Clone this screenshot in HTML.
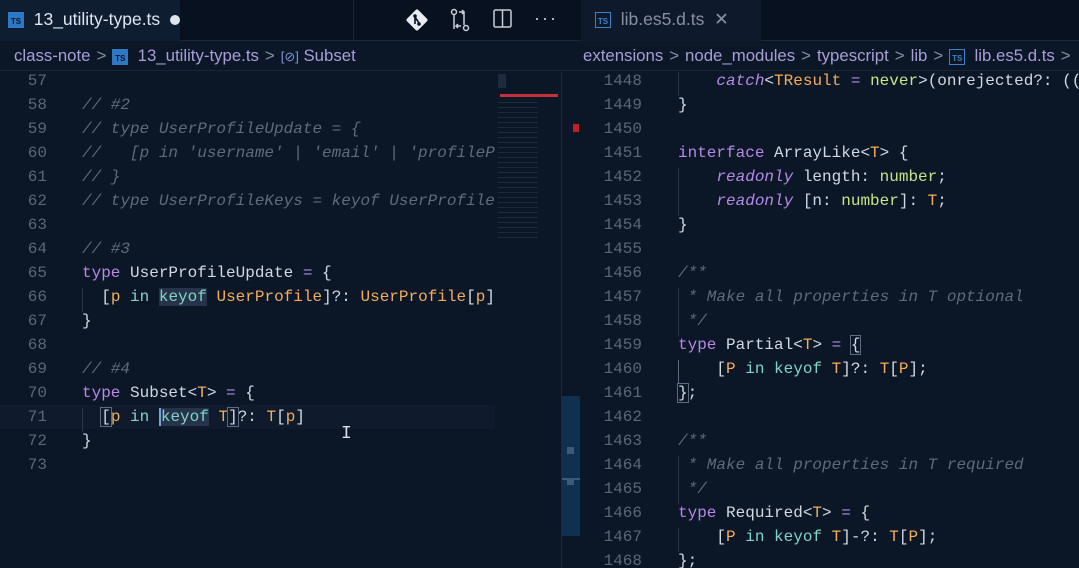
<!DOCTYPE html>
<html><head><meta charset="utf-8"><style>
*{margin:0;padding:0;box-sizing:border-box}
body{width:1079px;height:568px;overflow:hidden;background:#0b1626;font-family:"Liberation Sans",sans-serif;position:relative}
.abs{position:absolute}
.tabbar{top:0;height:41px;background:#08111f;border-bottom:1px solid #1b2638}
.ts{display:inline-block;width:16px;height:16px;background:#2f78c4;color:#0b1626;font-size:8px;font-weight:bold;line-height:20px;text-align:center;vertical-align:middle}
.tsb{display:inline-block;width:16px;height:16px;border:1.5px solid #3c82c8;color:#3c82c8;font-size:8px;font-weight:bold;line-height:18px;text-align:center;vertical-align:middle}
.crumb{color:#a99ed8;font-size:16.8px;top:46px;white-space:nowrap}
.crumb .s{color:#8890a8;margin:0 6px}
.code{font-family:"Liberation Mono",monospace;font-size:16px;white-space:pre;color:#d3d9e2}
.ln{font-family:"Liberation Mono",monospace;font-size:16px;color:#5b6678;text-align:right}
.l{position:absolute;height:24px;line-height:24px}
.c{color:#5f6b7a;font-style:italic}
.k{color:#b58ae6}
.t{color:#f2ae5c}
.q{color:#7fd6c6}
.n{color:#c6e58a}
.o{color:#b58ae6}
.ki{color:#b58ae6;font-style:italic}
.hl{background:#26334a}
.bx{outline:1px solid #5d6b80}
</style></head><body>
<div class="abs tabbar" style="left:0;width:1079px"></div>
<div class="abs" style="left:0;top:0;width:180px;height:41px;background:#0f1d31"></div>
<div class="abs" style="left:8px;top:9px;font-size:17.5px;color:#dfe5ee;white-space:nowrap"><span class="ts">TS</span>&nbsp; 13_utility-type.ts &nbsp;<span style="display:inline-block;width:10px;height:10px;border-radius:5px;background:#dfe5ee;vertical-align:middle"></span></div>
<div class="abs" style="left:353px;top:0;width:1px;height:41px;background:#1b2638"></div>
<svg class="abs" style="left:404px;top:7px" width="26" height="26" viewBox="0 0 26 26"><rect x="5" y="5" width="16" height="16" transform="rotate(45 13 13)" fill="#e8ecf2" rx="2"/><circle cx="11" cy="9" r="1.8" fill="#08111f"/><circle cx="15" cy="17" r="1.8" fill="#08111f"/><path d="M11 9 V17 M11 10 L15 16" stroke="#08111f" stroke-width="1.6"/></svg>
<svg class="abs" style="left:449px;top:8px" width="22" height="24" viewBox="0 0 22 24" fill="none" stroke="#c8ced8" stroke-width="1.5"><circle cx="5" cy="4" r="2.5"/><circle cx="17" cy="20" r="2.5"/><path d="M5 7v14M10 4h5v13M13 2l2 2-2 2M9 20l-2-2 2-2M7 18h5"/></svg>
<svg class="abs" style="left:492px;top:8px" width="22" height="22" viewBox="0 0 22 22" fill="none" stroke="#c8ced8" stroke-width="1.5"><rect x="2" y="2" width="17" height="17" rx="1.5"/><path d="M10.5 2v17"/></svg>
<div class="abs" style="left:534px;top:8px;color:#c8ced8;font-size:18px;letter-spacing:2px">···</div>
<div class="abs" style="left:581px;top:0;width:180px;height:41px;background:#0e1a2c"></div>
<div class="abs" style="left:595px;top:9px;font-size:17.5px;color:#8890a0;white-space:nowrap"><span class="tsb">TS</span>&nbsp; lib.es5.d.ts &nbsp;<span style="color:#8890a0">✕</span></div>
<div class="abs" style="left:0;top:41px;width:1079px;height:30px;background:#0b1626;border-bottom:1px solid #1a2538"></div>
<div class="abs crumb" style="left:14px">class-note<span class="s">&gt;</span><span class="ts">TS</span>&nbsp; 13_utility-type.ts<span class="s">&gt;</span><span style="color:#7a9ad8;font-size:13px">[⊘]</span> Subset</div>
<div class="abs crumb" style="left:583px">extensions<span class="s">&gt;</span>node_modules<span class="s">&gt;</span>typescript<span class="s">&gt;</span>lib<span class="s">&gt;</span><span class="tsb">TS</span>&nbsp; lib.es5.d.ts<span class="s">&gt;</span></div>
<div class="abs" style="left:0;top:72px;width:495px;height:496px;overflow:hidden">
<div class="abs" style="left:0;top:333px;width:495px;height:24px;background:#0f1b2d"></div>
<div class="abs ln" style="left:0;top:-3px;width:47px">
<div class="l" style="top:0;right:0">57</div><div class="l" style="top:24px;right:0">58</div><div class="l" style="top:48px;right:0">59</div><div class="l" style="top:72px;right:0">60</div><div class="l" style="top:96px;right:0">61</div><div class="l" style="top:120px;right:0">62</div><div class="l" style="top:144px;right:0">63</div><div class="l" style="top:168px;right:0">64</div><div class="l" style="top:192px;right:0">65</div><div class="l" style="top:216px;right:0">66</div><div class="l" style="top:240px;right:0">67</div><div class="l" style="top:264px;right:0">68</div><div class="l" style="top:288px;right:0">69</div><div class="l" style="top:312px;right:0">70</div><div class="l" style="top:336px;right:0">71</div><div class="l" style="top:360px;right:0">72</div><div class="l" style="top:384px;right:0">73</div>
</div>
<div class="abs code" style="left:82px;top:-3px">
<div class="l c" style="top:24px">// #2</div>
<div class="l c" style="top:48px">// type UserProfileUpdate = {</div>
<div class="l c" style="top:72px">//   [p in 'username' | 'email' | 'profilePhotoUrl']</div>
<div class="l c" style="top:96px">// }</div>
<div class="l c" style="top:120px">// type UserProfileKeys = keyof UserProfile</div>
<div class="l c" style="top:168px">// #3</div>
<div class="l" style="top:192px"><span class="k">type</span> UserProfileUpdate <span class="o">=</span> {</div>
<div class="l" style="top:216px">  [<span class="t">p</span> <span class="q">in</span> <span class="q hl">keyof</span> <span class="t">UserProfile</span>]?: <span class="t">UserProfile</span>[<span class="t">p</span>]</div>
<div class="l" style="top:240px">}</div>
<div class="l c" style="top:288px">// #4</div>
<div class="l" style="top:312px"><span class="k">type</span> Subset&lt;<span class="t">T</span>&gt; <span class="o">=</span> {</div>
<div class="l" style="top:336px">  <span class="bx">[</span><span class="t">p</span> <span class="q">in</span> <span class="q hl" style="border-left:2px solid #7aa2d8">keyof</span> <span class="t">T</span><span class="bx">]</span>?: <span class="t">T</span>[<span class="t">p</span>]</div>
<div class="l" style="top:360px">}</div>
</div>
<div class="abs" style="left:82px;top:216px;width:1px;height:24px;background:#2a3548"></div>
<div class="abs" style="left:82px;top:336px;width:1px;height:24px;background:#2a3548"></div>
<div class="abs" style="left:341px;top:352px;color:#dde;font-size:18px;font-family:'Liberation Mono'">I</div>
</div>
<div class="abs" style="left:496px;top:72px;width:64px;height:180px;overflow:hidden">
<div class="abs" style="left:4px;top:22px;width:58px;height:3px;background:#c5303a"></div>
<div class="abs" style="left:2px;top:2px;width:22px;height:14px;border-left:8px solid #3a4a60;opacity:.4"></div>
<div class="abs" style="left:2px;top:30px;width:40px;height:140px;background:repeating-linear-gradient(#3a4a60 0 1px,transparent 1px 5px);opacity:.4"></div>
</div>
<div class="abs" style="left:573px;top:124px;width:6px;height:8px;background:#c0202a"></div>
<div class="abs" style="left:562px;top:396px;width:18px;height:140px;background:#10304f"></div>
<div class="abs" style="left:567px;top:447px;width:7px;height:7px;background:#3b5a7c"></div>
<div class="abs" style="left:562px;top:478px;width:18px;height:2px;background:#3b5a7c"></div>
<div class="abs" style="left:567px;top:480px;width:7px;height:5px;background:#3b5a7c"></div>
<div class="abs" style="left:561px;top:72px;width:1px;height:496px;background:#1e2a3c"></div>
<div class="abs" style="left:580px;top:72px;width:499px;height:496px;overflow:hidden">
<div class="abs ln" style="left:0;top:-3px;width:62px">
<div class="l" style="top:0;right:0">1448</div><div class="l" style="top:24px;right:0">1449</div><div class="l" style="top:48px;right:0">1450</div><div class="l" style="top:72px;right:0">1451</div><div class="l" style="top:96px;right:0">1452</div><div class="l" style="top:120px;right:0">1453</div><div class="l" style="top:144px;right:0">1454</div><div class="l" style="top:168px;right:0">1455</div><div class="l" style="top:192px;right:0">1456</div><div class="l" style="top:216px;right:0">1457</div><div class="l" style="top:240px;right:0">1458</div><div class="l" style="top:264px;right:0">1459</div><div class="l" style="top:288px;right:0">1460</div><div class="l" style="top:312px;right:0">1461</div><div class="l" style="top:336px;right:0">1462</div><div class="l" style="top:360px;right:0">1463</div><div class="l" style="top:384px;right:0">1464</div><div class="l" style="top:408px;right:0">1465</div><div class="l" style="top:432px;right:0">1466</div><div class="l" style="top:456px;right:0">1467</div><div class="l" style="top:480px;right:0">1468</div>
</div>
<div class="abs code" style="left:98px;top:-3px">
<div class="l" style="top:0">    <span class="ki">catch</span>&lt;<span class="t">TResult</span> <span class="o">=</span> <span class="n">never</span>&gt;(onrejected?: ((</div>
<div class="l" style="top:24px">}</div>
<div class="l" style="top:72px"><span class="k">interface</span> ArrayLike&lt;<span class="t">T</span>&gt; {</div>
<div class="l" style="top:96px">    <span class="ki">readonly</span> length: <span class="n">number</span>;</div>
<div class="l" style="top:120px">    <span class="ki">readonly</span> [n: <span class="n">number</span>]: <span class="t">T</span>;</div>
<div class="l" style="top:144px">}</div>
<div class="l c" style="top:192px">/**</div>
<div class="l c" style="top:216px"> * Make all properties in T optional</div>
<div class="l c" style="top:240px"> */</div>
<div class="l" style="top:264px"><span class="k">type</span> Partial&lt;<span class="t">T</span>&gt; <span class="o">=</span> <span class="bx">{</span></div>
<div class="l" style="top:288px">    [<span class="t">P</span> <span class="q">in</span> <span class="q">keyof</span> <span class="t">T</span>]?: <span class="t">T</span>[<span class="t">P</span>];</div>
<div class="l" style="top:312px"><span class="bx">}</span>;</div>
<div class="l c" style="top:360px">/**</div>
<div class="l c" style="top:384px"> * Make all properties in T required</div>
<div class="l c" style="top:408px"> */</div>
<div class="l" style="top:432px"><span class="k">type</span> Required&lt;<span class="t">T</span>&gt; <span class="o">=</span> {</div>
<div class="l" style="top:456px">    [<span class="t">P</span> <span class="q">in</span> <span class="q">keyof</span> <span class="t">T</span>]-?: <span class="t">T</span>[<span class="t">P</span>];</div>
<div class="l" style="top:480px">};</div>
</div>
<div class="abs" style="left:98px;top:0px;width:1px;height:24px;background:#2a3548"></div>
<div class="abs" style="left:98px;top:96px;width:1px;height:48px;background:#2a3548"></div>
<div class="abs" style="left:98px;top:216px;width:1px;height:48px;background:#2a3548"></div>
<div class="abs" style="left:98px;top:288px;width:1px;height:24px;background:#5d6b80"></div>
<div class="abs" style="left:98px;top:384px;width:1px;height:48px;background:#2a3548"></div>
<div class="abs" style="left:98px;top:456px;width:1px;height:24px;background:#2a3548"></div>
</div>
</body></html>
